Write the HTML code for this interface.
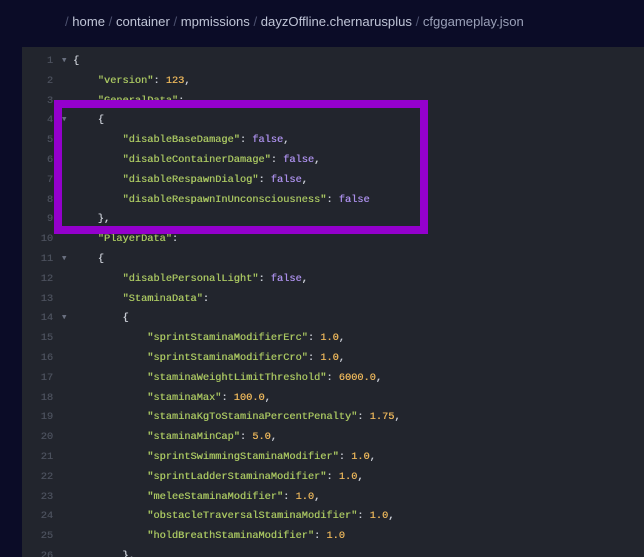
<!DOCTYPE html><html><head><style>
html,body{margin:0;width:644px;height:557px;overflow:hidden}
body{background:#0b0c27;position:relative;font-family:"Liberation Sans",sans-serif}
.bc{position:absolute;left:65px;top:14px;font-size:13.1px;color:#bfc4d6;white-space:nowrap}
.bc .s{color:#4d5270}.bc .f{color:#9aa0b8}
.ed{position:absolute;left:22px;top:47px;right:0;bottom:0;background:#22252d}
.l{position:absolute;left:0;height:19.8px;line-height:19.8px;font-family:"Liberation Mono",monospace;font-size:10.3px;white-space:pre;color:#c8ccd4;text-shadow:0.3px 0 0 currentColor}
.n{position:absolute;left:0;width:31px;text-align:right;color:#4b505c}
.a{position:absolute;left:40px;color:#6a7080;font-size:7px}
.c{position:absolute;left:51px}
.k{color:#a8c561}.num{color:#e8b45a}.b{color:#a98ee8}
.box{position:absolute;left:54px;top:100px;width:358px;height:118px;border:8px solid #9400cc}
</style></head><body>
<div class="bc"><span class="s">/</span> home <span class="s">/</span> container <span class="s">/</span> mpmissions <span class="s">/</span> dayzOffline.chernarusplus <span class="s">/</span> <span class="f">cfggameplay.json</span></div>
<div class="ed">
<div class="l" style="top:5px"><span class="n">1</span><span class="a">▼</span><span class="c">{</span></div>
<div class="l" style="top:24.8px"><span class="n">2</span><span class="c">    <span class="k">"version"</span>: <span class="num">123</span>,</span></div>
<div class="l" style="top:44.6px"><span class="n">3</span><span class="c">    <span class="k">"GeneralData"</span>:</span></div>
<div class="l" style="top:64.4px"><span class="n">4</span><span class="a">▼</span><span class="c">    {</span></div>
<div class="l" style="top:84.2px"><span class="n">5</span><span class="c">        <span class="k">"disableBaseDamage"</span>: <span class="b">false</span>,</span></div>
<div class="l" style="top:104px"><span class="n">6</span><span class="c">        <span class="k">"disableContainerDamage"</span>: <span class="b">false</span>,</span></div>
<div class="l" style="top:123.8px"><span class="n">7</span><span class="c">        <span class="k">"disableRespawnDialog"</span>: <span class="b">false</span>,</span></div>
<div class="l" style="top:143.6px"><span class="n">8</span><span class="c">        <span class="k">"disableRespawnInUnconsciousness"</span>: <span class="b">false</span></span></div>
<div class="l" style="top:163.4px"><span class="n">9</span><span class="c">    },</span></div>
<div class="l" style="top:183.2px"><span class="n">10</span><span class="c">    <span class="k">"PlayerData"</span>:</span></div>
<div class="l" style="top:203px"><span class="n">11</span><span class="a">▼</span><span class="c">    {</span></div>
<div class="l" style="top:222.8px"><span class="n">12</span><span class="c">        <span class="k">"disablePersonalLight"</span>: <span class="b">false</span>,</span></div>
<div class="l" style="top:242.6px"><span class="n">13</span><span class="c">        <span class="k">"StaminaData"</span>:</span></div>
<div class="l" style="top:262.4px"><span class="n">14</span><span class="a">▼</span><span class="c">        {</span></div>
<div class="l" style="top:282.2px"><span class="n">15</span><span class="c">            <span class="k">"sprintStaminaModifierErc"</span>: <span class="num">1.0</span>,</span></div>
<div class="l" style="top:302px"><span class="n">16</span><span class="c">            <span class="k">"sprintStaminaModifierCro"</span>: <span class="num">1.0</span>,</span></div>
<div class="l" style="top:321.8px"><span class="n">17</span><span class="c">            <span class="k">"staminaWeightLimitThreshold"</span>: <span class="num">6000.0</span>,</span></div>
<div class="l" style="top:341.6px"><span class="n">18</span><span class="c">            <span class="k">"staminaMax"</span>: <span class="num">100.0</span>,</span></div>
<div class="l" style="top:361.4px"><span class="n">19</span><span class="c">            <span class="k">"staminaKgToStaminaPercentPenalty"</span>: <span class="num">1.75</span>,</span></div>
<div class="l" style="top:381.2px"><span class="n">20</span><span class="c">            <span class="k">"staminaMinCap"</span>: <span class="num">5.0</span>,</span></div>
<div class="l" style="top:401px"><span class="n">21</span><span class="c">            <span class="k">"sprintSwimmingStaminaModifier"</span>: <span class="num">1.0</span>,</span></div>
<div class="l" style="top:420.8px"><span class="n">22</span><span class="c">            <span class="k">"sprintLadderStaminaModifier"</span>: <span class="num">1.0</span>,</span></div>
<div class="l" style="top:440.6px"><span class="n">23</span><span class="c">            <span class="k">"meleeStaminaModifier"</span>: <span class="num">1.0</span>,</span></div>
<div class="l" style="top:460.4px"><span class="n">24</span><span class="c">            <span class="k">"obstacleTraversalStaminaModifier"</span>: <span class="num">1.0</span>,</span></div>
<div class="l" style="top:480.2px"><span class="n">25</span><span class="c">            <span class="k">"holdBreathStaminaModifier"</span>: <span class="num">1.0</span></span></div>
<div class="l" style="top:500px"><span class="n">26</span><span class="c">        },</span></div>
</div>
<div class="box"></div>
</body></html>
